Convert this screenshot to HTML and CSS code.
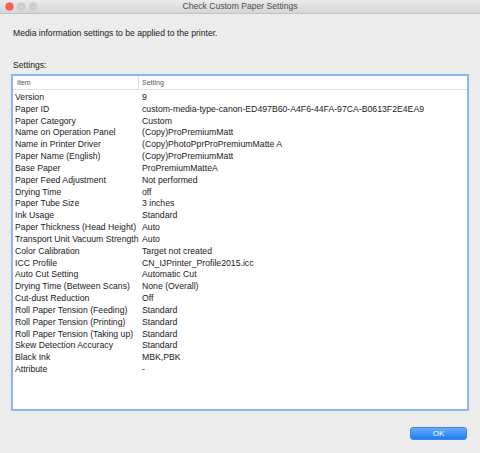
FILE: index.html
```html
<!DOCTYPE html>
<html>
<head>
<meta charset="utf-8">
<link rel="stylesheet" href="styles.css">
</head>
<body>
<div class="window">
  <div class="titlebar">
    <svg class="lights" width="40" height="10" viewBox="0 0 40 10">
      <circle cx="4.5" cy="4.5" r="3.8" fill="#fc5f57" stroke="#df4b44" stroke-width="0.6"/>
      <circle cx="16.3" cy="4.5" r="3.8" fill="#d0d0d0" stroke="#c0c0c0" stroke-width="0.6"/>
      <circle cx="28.1" cy="4.5" r="3.8" fill="#d0d0d0" stroke="#c0c0c0" stroke-width="0.6"/>
    </svg>
    <div class="title">Check Custom Paper Settings</div>
  </div>
  <div class="content">
    <p class="intro">Media information settings to be applied to the printer.</p>
    <p class="label">Settings:</p>
    <div class="table">
      <div class="thead">
        <div class="th col1">Item</div>
        <div class="th col2">Setting</div>
      </div>
      <div class="tbody">
        <div class="row"><span class="c1">Version</span><span class="c2">9</span></div>
        <div class="row"><span class="c1">Paper ID</span><span class="c2">custom-media-type-canon-ED497B60-A4F6-44FA-97CA-B0613F2E4EA9</span></div>
        <div class="row"><span class="c1">Paper Category</span><span class="c2">Custom</span></div>
        <div class="row"><span class="c1">Name on Operation Panel</span><span class="c2">(Copy)ProPremiumMatt</span></div>
        <div class="row"><span class="c1">Name in Printer Driver</span><span class="c2">(Copy)PhotoPprProPremiumMatte A</span></div>
        <div class="row"><span class="c1">Paper Name (English)</span><span class="c2">(Copy)ProPremiumMatt</span></div>
        <div class="row"><span class="c1">Base Paper</span><span class="c2">ProPremiumMatteA</span></div>
        <div class="row"><span class="c1">Paper Feed Adjustment</span><span class="c2">Not performed</span></div>
        <div class="row"><span class="c1">Drying Time</span><span class="c2">off</span></div>
        <div class="row"><span class="c1">Paper Tube Size</span><span class="c2">3 inches</span></div>
        <div class="row"><span class="c1">Ink Usage</span><span class="c2">Standard</span></div>
        <div class="row"><span class="c1">Paper Thickness (Head Height)</span><span class="c2">Auto</span></div>
        <div class="row"><span class="c1">Transport Unit Vacuum Strength</span><span class="c2">Auto</span></div>
        <div class="row"><span class="c1">Color Calibration</span><span class="c2">Target not created</span></div>
        <div class="row"><span class="c1">ICC Profile</span><span class="c2">CN_IJPrinter_Profile2015.icc</span></div>
        <div class="row"><span class="c1">Auto Cut Setting</span><span class="c2">Automatic Cut</span></div>
        <div class="row"><span class="c1">Drying Time (Between Scans)</span><span class="c2">None (Overall)</span></div>
        <div class="row"><span class="c1">Cut-dust Reduction</span><span class="c2">Off</span></div>
        <div class="row"><span class="c1">Roll Paper Tension (Feeding)</span><span class="c2">Standard</span></div>
        <div class="row"><span class="c1">Roll Paper Tension (Printing)</span><span class="c2">Standard</span></div>
        <div class="row"><span class="c1">Roll Paper Tension (Taking up)</span><span class="c2">Standard</span></div>
        <div class="row"><span class="c1">Skew Detection Accuracy</span><span class="c2">Standard</span></div>
        <div class="row"><span class="c1">Black Ink</span><span class="c2">MBK,PBK</span></div>
        <div class="row"><span class="c1">Attribute</span><span class="c2">-</span></div>
      </div>
    </div>
    <div class="actions">
      <button class="ok">OK</button>
    </div>
  </div>
</div>
</body>
</html>
```

FILE: styles.css
```css
* { box-sizing: border-box; }
html, body {
  margin: 0;
  padding: 0;
  width: 480px;
  height: 453px;
  overflow: hidden;
}
body {
  background: #ececec;
  font-family: "Liberation Sans", Arial, sans-serif;
  color: #1a1a1a;
}
.window {
  width: 480px;
  height: 453px;
  display: flex;
  flex-direction: column;
}
.titlebar {
  height: 14px;
  background: linear-gradient(#ebebeb, #d5d5d5);
  border-bottom: 1px solid #c4c4c4;
  display: flex;
  align-items: center;
  justify-content: center;
  position: relative;
}
.lights {
  position: absolute;
  left: 5px;
  top: 2px;
  display: block;
}
.title {
  font-size: 8.6px;
  color: #4d4d4d;
  line-height: 13px;
}
.content {
  flex: 1;
  display: flex;
  flex-direction: column;
  padding: 0 11px 0 11px;
}
.intro {
  margin: 13px 0 0 2px;
  font-size: 8.6px;
  line-height: 12px;
}
.label {
  margin: 20px 0 0 2px;
  font-size: 8.6px;
  line-height: 12px;
}
.table {
  margin-top: 3px;
  width: 458px;
  height: 337px;
  background: #fff;
  border: 2px solid #8cb6f2;
  display: flex;
  flex-direction: column;
}
.thead {
  display: flex;
  height: 14px;
  border-bottom: 1px solid #e2e2e2;
}
.th {
  font-size: 7px;
  color: #555;
  line-height: 13px;
}
.th.col1 {
  width: 126px;
  padding-left: 4px;
  border-right: 1px solid #dcdcdc;
}
.th.col2 {
  padding-left: 3px;
}
.tbody {
  padding-top: 2px;
}
.row {
  display: flex;
  height: 11.84px;
  line-height: 11.84px;
  font-size: 8.7px;
  white-space: nowrap;
}
.c1 {
  width: 126px;
  padding-left: 2px;
  flex: none;
}
.c2 {
  padding-left: 3px;
}
.actions {
  display: flex;
  justify-content: flex-end;
  margin-top: 16px;
  padding-right: 2px;
}
.ok {
  width: 57px;
  height: 13px;
  border: 1px solid #3f86e8;
  border-radius: 3px;
  background: linear-gradient(#69abf8, #1e7ef3);
  color: #fff;
  font-family: "Liberation Sans", Arial, sans-serif;
  font-size: 8px;
  line-height: 11px;
  padding: 0;
}
```
